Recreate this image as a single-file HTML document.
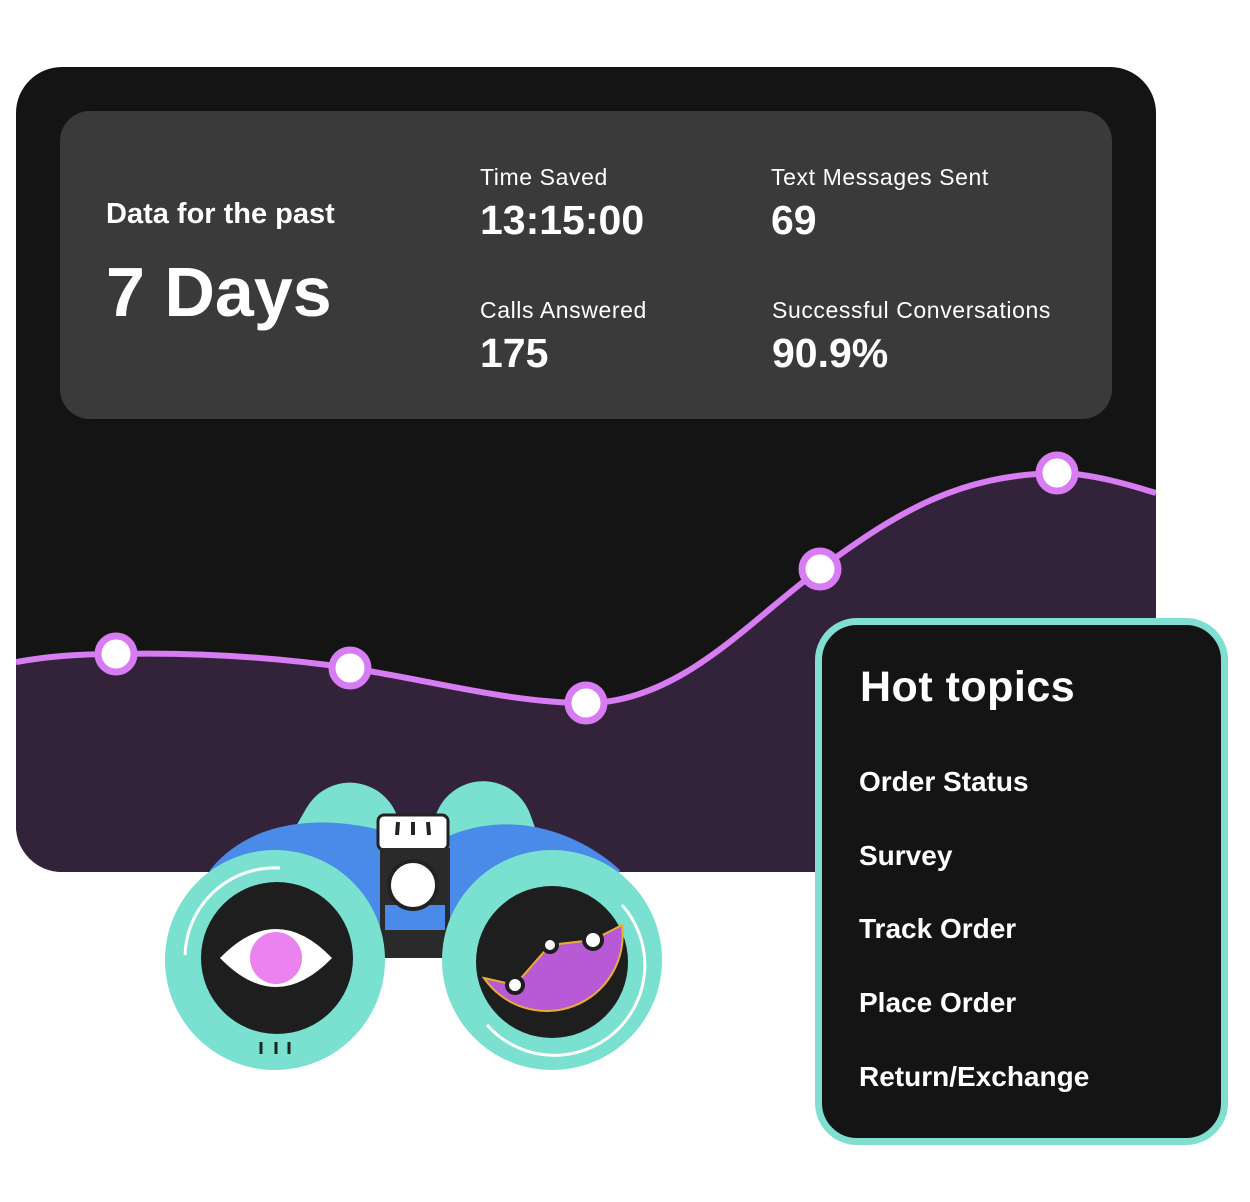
<!DOCTYPE html>
<html><head><meta charset="utf-8"><style>
*{margin:0;padding:0;box-sizing:border-box}
body{width:1250px;height:1202px;background:#fff;position:relative;overflow:hidden;font-family:"Liberation Sans",sans-serif;color:#fff}
.main{position:absolute;left:16px;top:67px;width:1140px;height:805px;background:#141414;border-radius:46px;overflow:hidden}
.box{position:absolute;left:60px;top:111px;width:1052px;height:308px;background:#3a3a3a;border-radius:30px}
.t{position:absolute;white-space:nowrap}
.lbl{font-size:23px;letter-spacing:0.6px}
.val{font-size:41px;font-weight:bold}
.hot{position:absolute;left:815px;top:618px;width:413px;height:527px;background:#141414;border:7px solid #80dfd0;border-radius:42px}
.hi{font-size:28px;font-weight:bold;position:absolute;left:44px}
</style></head><body>
<div class="main">
<svg width="1140" height="805" style="position:absolute;left:0;top:0">
<g transform="translate(-16,-67)">
<path d="M16,662 C50,656 80,654 116,654 C200,652 280,658 350,668 C430,680 510,703 586,703 C680,703 750,620 820,569 C900,510 960,475 1057,473 C1090,473 1130,485 1156,493 L1156,880 L16,880 Z" fill="#33233a"/>
<path d="M16,662 C50,656 80,654 116,654 C200,652 280,658 350,668 C430,680 510,703 586,703 C680,703 750,620 820,569 C900,510 960,475 1057,473 C1090,473 1130,485 1156,493" fill="none" stroke="#d77cf2" stroke-width="6"/>
<g fill="#fff" stroke="#d77cf2" stroke-width="7">
<circle cx="116" cy="654" r="18"/><circle cx="350" cy="668" r="18"/><circle cx="586" cy="703" r="18"/><circle cx="820" cy="569" r="18"/><circle cx="1057" cy="473" r="18"/>
</g></g></svg>
</div>
<div class="box"></div>
<div class="t" style="left:106px;top:198px;font-size:29px;font-weight:bold">Data for the past</div>
<div class="t" style="left:106px;top:252px;font-size:70px;font-weight:bold">7 Days</div>
<div class="t lbl" style="left:480px;top:164px">Time Saved</div>
<div class="t val" style="left:480px;top:197px">13:15:00</div>
<div class="t lbl" style="left:480px;top:297px">Calls Answered</div>
<div class="t val" style="left:480px;top:330px">175</div>
<div class="t lbl" style="left:771px;top:164px">Text Messages Sent</div>
<div class="t val" style="left:771px;top:197px">69</div>
<div class="t lbl" style="left:772px;top:297px">Successful Conversations</div>
<div class="t val" style="left:772px;top:330px">90.9%</div>

<svg width="1250" height="1202" style="position:absolute;left:0;top:0">
<rect x="290" y="780" width="100" height="140" rx="50" fill="#7ae0cf" transform="rotate(30 340 850)"/>
<rect x="440" y="780" width="100" height="140" rx="50" fill="#7ae0cf" transform="rotate(-20 490 850)"/>
<path d="M210,870 C250,820 320,815 380,830 L400,930 L230,930 Z" fill="#4a8ae8"/>
<path d="M440,840 C500,810 570,825 620,870 L600,930 L430,930 Z" fill="#4a8ae8"/>
<rect x="378" y="815" width="70" height="35" rx="6" fill="#fff" stroke="#222" stroke-width="3"/>
<g stroke="#222" stroke-width="4"><line x1="398" y1="822" x2="397" y2="835"/><line x1="413" y1="822" x2="413" y2="835"/><line x1="428" y1="822" x2="429" y2="835"/></g>
<rect x="380" y="848" width="70" height="110" fill="#2a2a2a"/>
<rect x="385" y="905" width="60" height="25" fill="#4a8ae8"/>
<circle cx="413" cy="885" r="24" fill="#fff" stroke="#222" stroke-width="4"/>
<circle cx="275" cy="960" r="110" fill="#7ae0cf"/>
<circle cx="552" cy="960" r="110" fill="#7ae0cf"/>
<path d="M185,955 A90,90 0 0 1 280,868" fill="none" stroke="#fff" stroke-width="3"/>
<path d="M622,905 A90,90 0 0 1 487,1025" fill="none" stroke="#fff" stroke-width="3"/>
<circle cx="277" cy="958" r="76" fill="#1e1e1e"/>
<path d="M220,958 Q276,900 332,958 Q276,1016 220,958 Z" fill="#fff"/>
<circle cx="276" cy="958" r="26" fill="#ea82ef"/>
<circle cx="552" cy="962" r="76" fill="#1e1e1e"/>
<path d="M484,978 L515,985 L550,945 L593,940 L622,925 A76,76 0 0 1 484,978 Z" fill="#b85ad6" stroke="#e8b030" stroke-width="2"/>
<g fill="#fff" stroke="#1e1e1e" stroke-width="4"><circle cx="515" cy="985" r="8"/><circle cx="550" cy="945" r="7"/><circle cx="593" cy="940" r="9"/></g>
<g stroke="#222" stroke-width="3"><line x1="261" y1="1042" x2="261" y2="1054"/><line x1="276" y1="1042" x2="276" y2="1054"/><line x1="289" y1="1042" x2="289" y2="1054"/></g>
</svg>

<div class="hot">
<div class="t" style="left:38px;top:38px;font-size:43px;font-weight:bold;letter-spacing:0.5px">Hot topics</div>
<div class="t hi" style="top:141px;left:37px">Order Status</div>
<div class="t hi" style="top:215px;left:37px">Survey</div>
<div class="t hi" style="top:288px;left:37px">Track Order</div>
<div class="t hi" style="top:362px;left:37px">Place Order</div>
<div class="t hi" style="top:436px;left:37px">Return/Exchange</div>
</div>
</body></html>
